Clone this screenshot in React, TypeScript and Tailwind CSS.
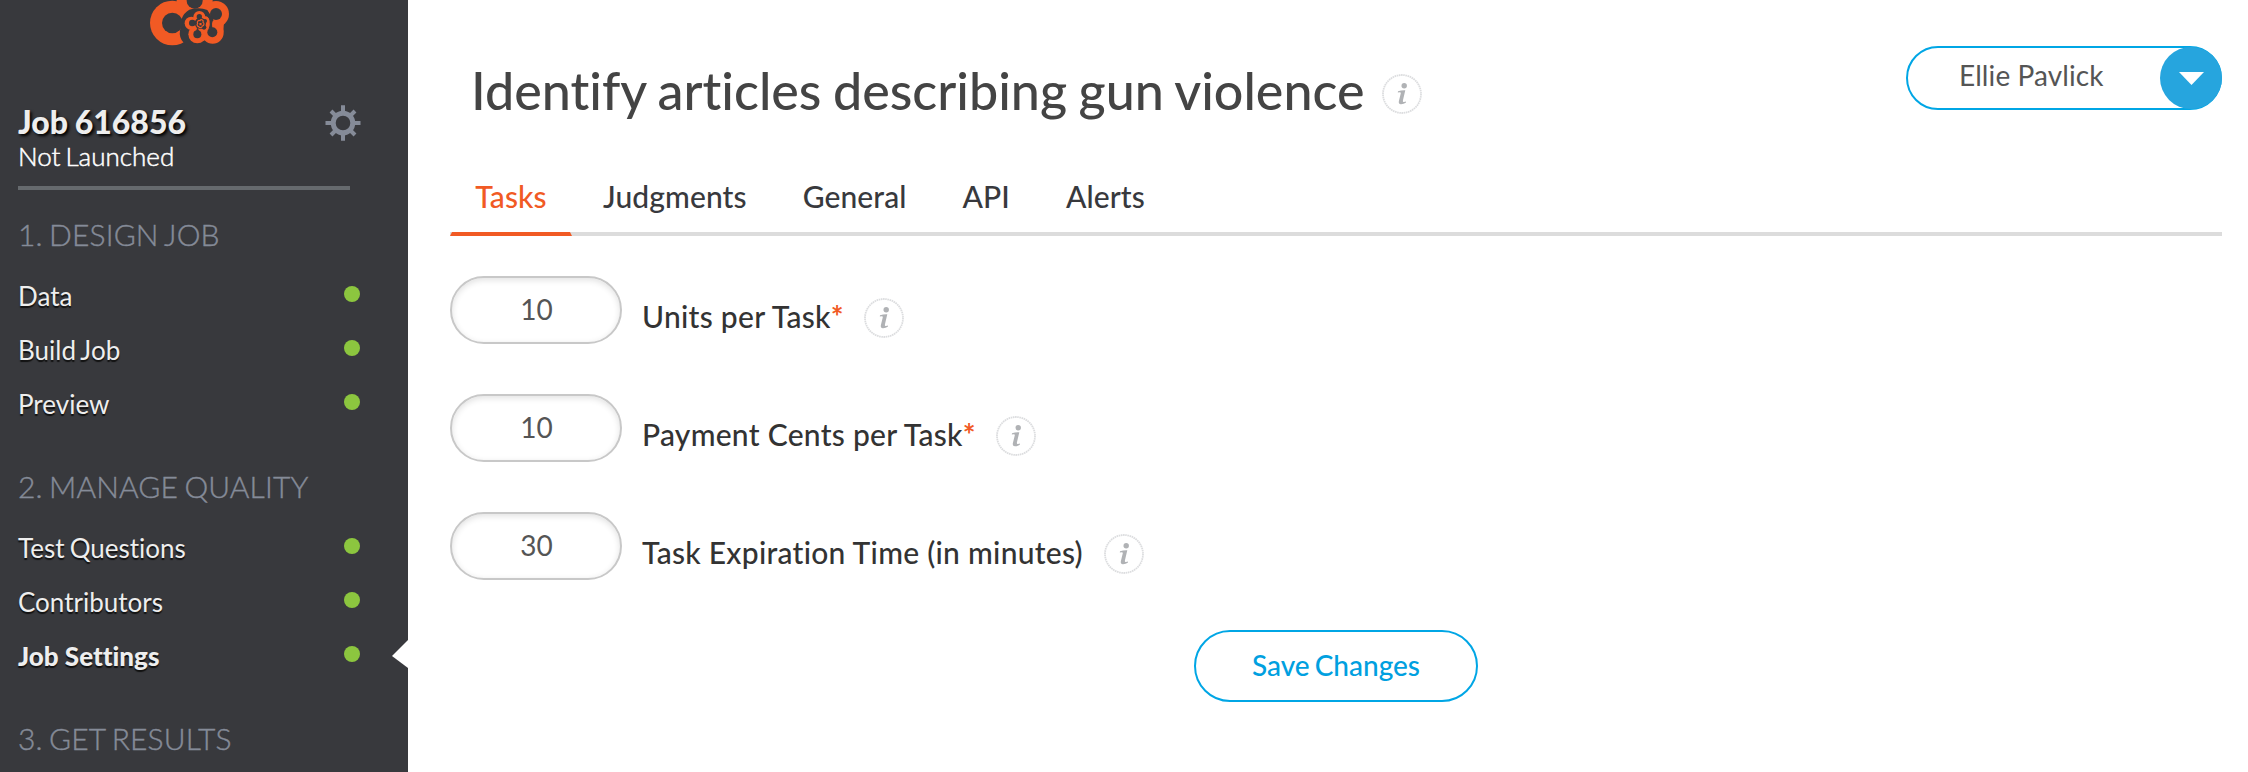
import React from "react";

const sections = [
  { title: "1. DESIGN JOB", items: ["Data", "Build Job", "Preview"] },
  { title: "2. MANAGE QUALITY", items: ["Test Questions", "Contributors", "Job Settings"] },
  { title: "3. GET RESULTS", items: [] },
];

const tabs = ["Judgments", "General", "API", "Alerts"];

const fields = [
  { value: "10", label: "Units per Task", required: true, width: "w-[222px]" },
  { value: "10", label: "Payment Cents per Task", required: true, width: "w-[354px]" },
  { value: "30", label: "Task Expiration Time (in minutes)", required: false, width: "w-[462px]" },
];

function Logo() {
  return (
    <svg className="ml-[148px] block h-[48px] w-[84px]" viewBox="444 0 252 144">
      <g fill="#f15a24">
        <circle cx="517" cy="69" r="67" />
        <circle cx="584" cy="4" r="54" />
        <circle cx="648" cy="42" r="39" />
      </g>
      <g fill="#38393d">
        <path d="M552 130Q536 112 540 92L545 56Q552 38 568 29Q598 20 622 30L640 60L640 144L560 144Z" />
        <circle cx="517" cy="69" r="31" />
        <circle cx="584" cy="2" r="24" />
      </g>
      <g fill="#f15a24">
        <circle cx="638" cy="98" r="33" />
        <path d="M636 62L672 60L670 96L640 90Z" />
        <circle cx="592" cy="103" r="27" />
        <path d="M600 100H630L622 122Q614 118 608 124Z" />
        <circle cx="574" cy="70" r="20" />
        <circle cx="598" cy="51" r="18" />
        <circle cx="616" cy="63" r="14" />
        <circle cx="604" cy="80" r="24" />
      </g>
      <g fill="#38393d">
        <circle cx="648" cy="42" r="18" />
        <path d="M606 27Q624 31 634 50L640 60Q634 68 637 84L626 86Q636 60 618 44Q612 32 602 30Z" />
        <circle cx="637" cy="97" r="15" />
        <circle cx="592" cy="103" r="12" />
        <circle cx="577" cy="69" r="10" />
        <circle cx="598" cy="50" r="8" />
        <circle cx="615" cy="63" r="6" />
        <circle cx="612" cy="82" r="7" />
        <path d="M588 94L592 82L598 94Z" />
        <circle cx="601" cy="70" r="17" />
      </g>
      <path
        fill="none"
        stroke="#f15a24"
        strokeWidth="3.5"
        d="M596 80a6 6 0 0 1-3-10a5.500 5.500 0 0 1 7-8a5 5 0 0 1 9 5a6 6 0 0 1-2 11a6 6 0 0 1-11 2ZM600 71h3v3h-3Z"
      />
    </svg>
  );
}

function Gear() {
  return (
    <svg className="mt-px h-[36px] w-[36px]" viewBox="-18 -18 36 36" fill="none" stroke="#858b98">
      <circle r="9.8" strokeWidth="5" />
      <path
        strokeWidth="4"
        d="M0-11V-17.7M0 11V17.7M-11 0H-17.5M11 0H17.5M-8-8L-12-12M8-8L12-12M-8 8L-12 12M8 8L12 12"
      />
    </svg>
  );
}

function Info() {
  return (
    <svg className="h-[40px] w-[40px] shrink-0" viewBox="0 0 40 40">
      <circle cx="20" cy="20" r="19" fill="none" stroke="#dcdddf" strokeWidth="1.8" strokeDasharray="1.6 .6" />
      <circle cx="22.2" cy="11.8" r="2.7" fill="#b0b2b5" />
      <path
        fill="#b0b2b5"
        d="M16 17.2Q19.500 16 23.300 16.200L20.900 26.400Q20.600 28.200 22 27.900L24 27.500L23.800 28.800Q21.500 30.300 18.800 30.200Q16.200 30 16.900 27L18.800 19.200Q18.900 18.200 17.800 18.300L15.800 18.500Z"
      />
    </svg>
  );
}

export default function App() {
  return (
    <div className="flex h-[772px] w-[2248px] overflow-hidden bg-white font-['Lato',sans-serif] [font-variant-ligatures:none]">
      <aside className="h-full w-[408px] shrink-0 bg-[#38393d]">
        <Logo />
        <div className="ml-[18px] flex h-[142px] w-[332px] flex-col border-b-[4px] border-[#666a6e] pt-[56px]">
          <div className="flex h-[36px] justify-between">
            <h2 className="text-[32px] leading-[36px] font-black whitespace-nowrap text-[#eee] [text-shadow:2px_2px_3px_#000] [word-spacing:-1px]">
              Job 616856
            </h2>
            <div className="-mr-[11px]">
              <Gear />
            </div>
          </div>
          <p className="text-[26px] leading-[32px] font-light text-white [-webkit-text-stroke:0.5px_#fff] [word-spacing:-2px]">
            Not Launched
          </p>
        </div>
        <nav className="pt-[26px]">
          {sections.map((s) => (
            <section key={s.title} className="h-[252px] pl-[18px]">
              <h3 className="mb-[17px] text-[30px] leading-[36px] font-light tracking-[0.15px] whitespace-nowrap text-[#858b98] [-webkit-text-stroke:0.4px_#858b98] [word-spacing:-2px]">
                {s.title}
              </h3>
              {s.items.map((item) => (
                <div key={item} className="flex h-[54px] items-center justify-between">
                  <span
                    className={
                      item === "Job Settings"
                        ? "text-[26px] font-black text-[#eee] [text-shadow:0_2px_1px_#111]"
                        : "text-[26px] text-[#eee] [text-shadow:0_2px_1px_#111] [word-spacing:-1.5px]"
                    }
                  >
                    {item}
                  </span>
                  <span className="flex items-center">
                    <i
                      className={
                        item === "Job Settings"
                          ? "mr-[32px] mb-[4px] size-[16px] rounded-full bg-[#8cc63f]"
                          : "mr-[48px] mb-[4px] size-[16px] rounded-full bg-[#8cc63f]"
                      }
                    />
                    {item === "Job Settings" && (
                      <svg className="h-[32px] w-[16px]" viewBox="0 0 16 32">
                        <path fill="#fff" d="M16 0L0 16L16 28Z" />
                      </svg>
                    )}
                  </span>
                </div>
              ))}
            </section>
          ))}
        </nav>
      </aside>

      <main className="flex h-full w-[1814px] flex-col pl-[42px]">
        <header className="flex h-[164px] w-[1772px] justify-between">
          <div className="flex pt-[58px] pl-[21px]">
            <h1 className="w-[911px] text-[52px] leading-[64px] font-medium whitespace-nowrap text-[#444] [word-spacing:-1.6px]">
              Identify articles describing gun violence
            </h1>
            <div className="pt-[16px]">
              <Info />
            </div>
          </div>
          <button className="mt-[46px] flex h-[64px] w-[316px] items-center justify-between rounded-full border-2 border-[#00a6e5] pl-[51px]">
            <span className="-mt-[6px] text-[28px] leading-[34px] tracking-[0.1px] text-[#555]">Ellie Pavlick</span>
            <span className="-mr-[2px] flex size-[62px] items-center justify-center rounded-full bg-[#26a5de]">
              <svg className="h-[13px] w-[25px]" viewBox="0 0 25 13">
                <path fill="#fff" d="M0 0H25L12.500 13Z" />
              </svg>
            </span>
          </button>
        </header>

        <div className="flex h-[72px] w-[1772px] border-b-[4px] border-[#dcdcdc] text-[30px] leading-[36px] font-medium tracking-[0.1px] text-[#38393d]">
          <div className="flex h-[72px] w-[122px] shrink-0 flex-col items-center justify-between pt-[14px] text-[#f15a24]">
            <span>Tasks</span>
            <svg className="h-[4px] w-[122px]" viewBox="0 0 122 4">
              <path fill="#f15a24" d="M2 0H120L122 4H0Z" />
            </svg>
          </div>
          <div className="flex gap-[56px] pt-[14px] pl-[31px]">
            {tabs.map((t) => (
              <span key={t}>{t}</span>
            ))}
          </div>
        </div>

        <form className="flex w-[1772px] flex-col pt-[40px]">
          {fields.map((f) => (
            <div key={f.label} className="flex h-[118px]">
              <div className="flex h-[68px] w-[172px] items-center justify-center rounded-full border-2 border-[#c8c8c8] pl-[1px] text-[28px] text-[#555] shadow-[inset_0_2px_6px_rgba(0,0,0,0.12)]">
                <span className="-mt-[2px]">{f.value}</span>
              </div>
              <div className="flex h-[40px] pt-[22px] pl-[20px]">
                <div className={f.width}>
                  <label className="text-[30px] leading-[36px] font-medium tracking-[0.27px] whitespace-nowrap text-[#333]">
                    {f.label}
                    {f.required && <span className="font-bold text-[#f15a24]">*</span>}
                  </label>
                </div>
                <Info />
              </div>
            </div>
          ))}
          <button
            type="button"
            className="mx-auto flex h-[72px] w-[284px] items-center justify-center rounded-full border-2 border-[#00a6e5] text-[28px] font-medium text-[#00a0e0] [word-spacing:-2px]"
          >
            <span className="-mt-[2px]">Save Changes</span>
          </button>
        </form>
      </main>
    </div>
  );
}
